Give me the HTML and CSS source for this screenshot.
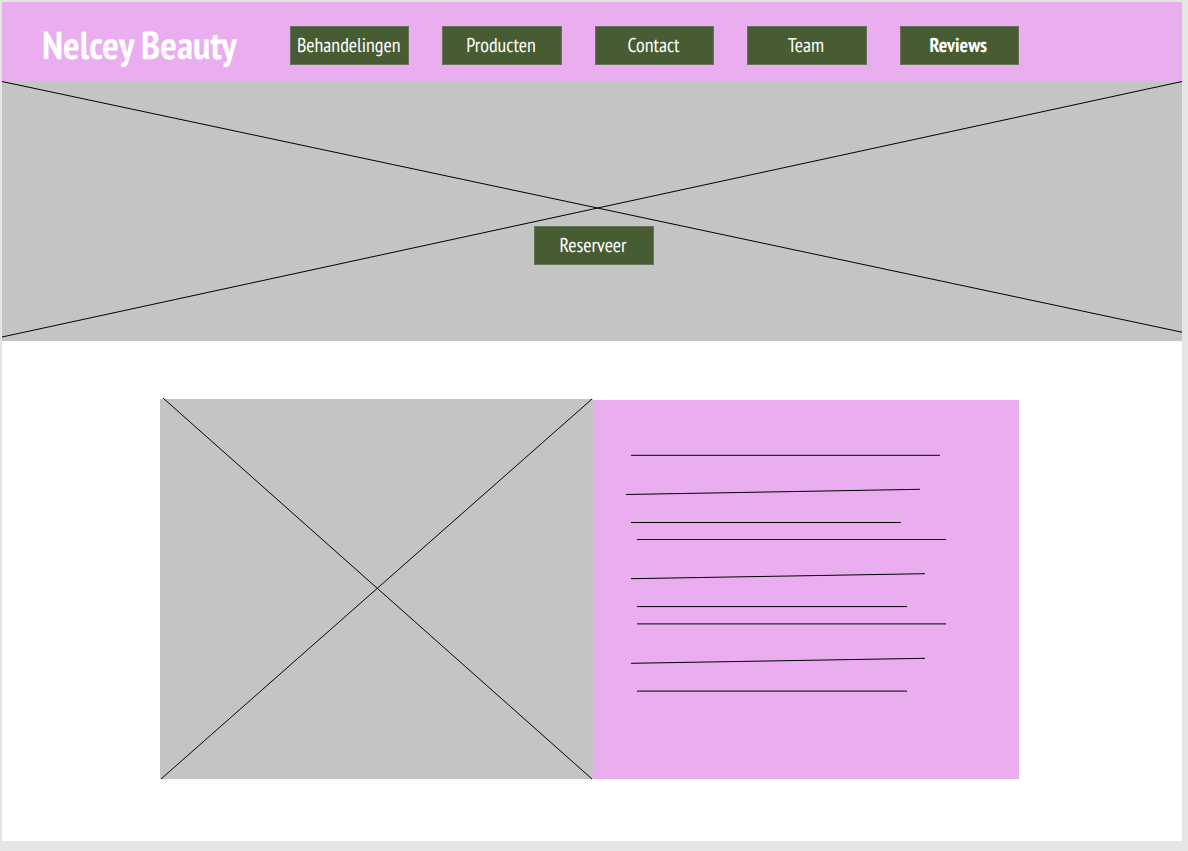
FILE: index.html
```html
<!DOCTYPE html>
<html lang="nl">
<head>
<meta charset="utf-8">
<meta name="viewport" content="width=device-width, initial-scale=1">
<title>Nelcey Beauty</title>
<link rel="stylesheet" href="styles.css">
</head>
<body>
<div class="page">
  <header class="header">
    <h1 class="brand">Nelcey Beauty</h1>
    <nav class="nav">
      <a class="button" href="#behandelingen">Behandelingen</a>
      <a class="button" href="#producten">Producten</a>
      <a class="button" href="#contact">Contact</a>
      <a class="button" href="#team">Team</a>
      <a class="button button-current" href="#reviews" aria-current="page">Reviews</a>
    </nav>
  </header>
  <main>
    <section class="hero">
      <svg class="cross" viewBox="0 0 1180 259" preserveAspectRatio="none" aria-hidden="true">
        <path d="M0 -0.500L1180 250.200M0 255L1180 -0.500"/>
      </svg>
      <button class="button button-reserve" type="button">Reserveer</button>
    </section>
    <section class="feature">
      <div class="picture">
        <svg class="cross" viewBox="0 0 433 380" preserveAspectRatio="none" aria-hidden="true">
          <path d="M3 -1L432 380M1 380L432 0"/>
        </svg>
      </div>
      <div class="text-panel">
        <svg class="cross" viewBox="0 0 426 379" preserveAspectRatio="none" aria-hidden="true">
          <path d="M38 55.300H347M33 94.500L327 89.300M38 122.500H308M44 139.500H353M38 178.700L332 173.700M44 206.600H314M44 223.900H353M38 263.300L332 258.300M44 291.100H314"/>
        </svg>
      </div>
    </section>
  </main>
</div>
</body>
</html>
```
FILE: styles.css
```css
* {
  box-sizing: border-box;
}

body {
  margin: 0;
  padding: 2px 6px 10px 2px;
  background: #e5e5e5;
  font-family: "PT Sans Narrow", "Liberation Sans Narrow", "Arial Narrow", "Open Sans", sans-serif;
  text-rendering: geometricPrecision;
}

.page {
  background: #fff;
}

.header {
  display: flex;
  align-items: flex-start;
  padding: 24px 163px 17px 40px;
  background: #eaadef;
}

.brand {
  flex: 0 0 248px;
  margin: 0;
  color: #fff;
  font-size: 39px;
  line-height: 38px;
  white-space: nowrap;
}

.nav {
  flex: 1;
  display: grid;
  grid-template-columns: repeat(5, 1fr);
  gap: 33px;
}

.button {
  display: block;
  height: 39px;
  padding: 0 2px 0 0;
  border: 1px solid #65745a;
  background: #475c33;
  color: #fff;
  font-family: inherit;
  font-size: 20px;
  line-height: 37px;
  text-align: center;
  text-decoration: none;
  text-rendering: inherit;
}

.button-current {
  font-weight: bold;
}

.button-reserve {
  position: relative;
  width: 120px;
  cursor: pointer;
}

.hero {
  position: relative;
  display: flex;
  justify-content: center;
  padding: 144px 0 76px 4px;
  background: #c4c4c4;
}

.cross {
  position: absolute;
  inset: 0;
  width: 100%;
  height: 100%;
  overflow: visible;
  fill: none;
  stroke: #000;
  stroke-width: 1px;
}

.cross path {
  vector-effect: non-scaling-stroke;
}

.feature {
  display: grid;
  grid-template-columns: 433fr 426fr;
  padding: 58px 163px 62px 158px;
}

.picture {
  position: relative;
  min-height: 380px;
  background: #c4c4c4;
}

.text-panel {
  position: relative;
  margin-top: 1px;
  background: #eaadef;
}
```
